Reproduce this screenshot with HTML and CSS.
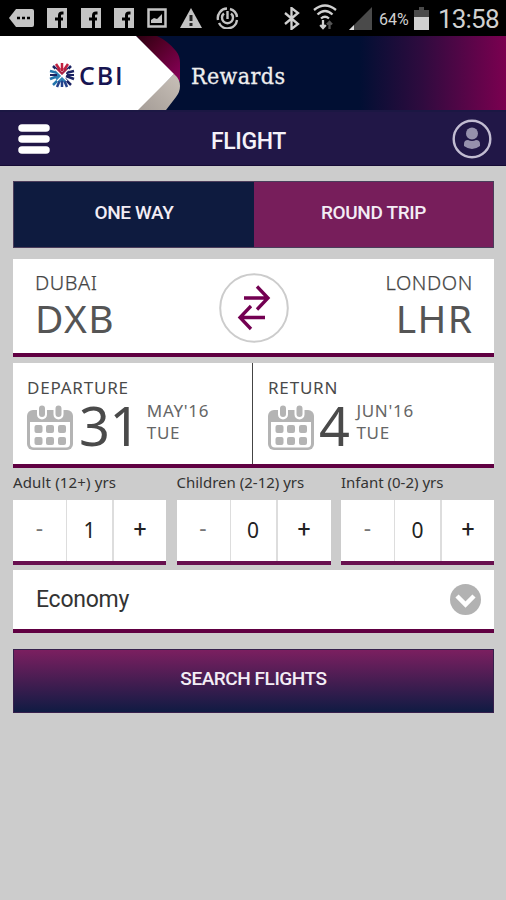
FILE: index.html
```html
<!DOCTYPE html>
<html lang="en">
<head>
<meta charset="utf-8">
<title>CBI Rewards</title>
<link rel="stylesheet" href="styles.css">
</head>
<body>
<svg class="defs" width="0" height="0" aria-hidden="true">
  <symbol id="social" viewBox="0 0 20 20"><path fill="#c4c4c4" d="M0 0h20v20H0z"/><path d="M16.500 5h-1.500q-2.500 0-2.500 2.500V20M8 11h8" fill="none" stroke="#000" stroke-width="3"/></symbol>
  <symbol id="calendar" viewBox="0 0 46 46">
    <path fill="#b4b4b4" d="M6 5h34a6 6 0 0 1 6 6v28a6 6 0 0 1-6 6H6a6 6 0 0 1-6-6V11a6 6 0 0 1 6-6z"/>
    <path fill="#fff" d="M3 17h40v21.500a4 4 0 0 1-4 4H7a4 4 0 0 1-4-4z"/>
    <g stroke-linecap="round"><path d="M15 4v5.500M31.500 4v5.500" stroke="#fff" stroke-width="10"/><path d="M15 3.500v5.500M31.500 3.500v5.500" stroke="#b4b4b4" stroke-width="6"/></g>
    <g fill="#b4b4b4"><rect x="7.500" y="20" width="8" height="8" rx="2"/><rect x="19" y="20" width="8" height="8" rx="2"/><rect x="31" y="20" width="8" height="8" rx="2"/><rect x="7.500" y="32" width="8" height="8" rx="2"/><rect x="19" y="32" width="8" height="8" rx="2"/><rect x="31" y="32" width="8" height="8" rx="2"/></g>
  </symbol>
</svg>

<div class="status">
  <div class="notices">
    <svg width="25" height="18" viewBox="0 0 25 18"><path fill="#c4c4c4" d="M7 0h16q2 0 2 2v14q0 2-2 2H7L0 9z"/><path d="M8 9h3m2 0h3m2 0h3" stroke="#000" stroke-width="2.500"/></svg>
    <svg width="20" height="20"><use href="#social"/></svg>
    <svg width="20" height="20"><use href="#social"/></svg>
    <svg width="20" height="20"><use href="#social"/></svg>
    <svg width="20" height="20" viewBox="0 0 20 20"><path d="M1.500 1.500h17v17h-17z" fill="none" stroke="#c4c4c4" stroke-width="2.500"/><path fill="#c4c4c4" d="M4 15v-3l3-2 3 1 5-5v9z"/></svg>
    <svg width="22" height="20" viewBox="0 0 22 20"><path fill="#c4c4c4" d="M11 0l11 20H0z"/><path d="M11 7v6m0 2v3" stroke="#222" stroke-width="3"/></svg>
    <svg width="23" height="22" viewBox="0 0 23 22"><g fill="none" stroke="#c4c4c4" stroke-width="2.400"><path d="M14 2a9.500 9.500 0 0 1 7 8M21 13a9.500 9.500 0 0 1-18 3M2 13A9.500 9.500 0 0 1 11 1.500"/><path d="M8 6.500a5.500 5.500 0 1 0 7 0M11.500 4v8"/></g></svg>
  </div>
  <div class="system">
    <svg width="16" height="23" viewBox="0 0 16 23"><path d="M1 6l13 11-6.500 5V1L14 6 1 17" fill="none" stroke="#d0d0d0" stroke-width="2.300"/></svg>
    <svg class="wifi" width="24" height="26" viewBox="0 0 24 26"><g fill="none" stroke="#d0d0d0" stroke-width="2.300"><path d="M1 6q11-9 22 0M4.500 10.500q7.500-7 15 0M8 14.500q4-3.500 8 0"/><path d="M10 16v8m-2.800-3l2.800 3 2.800-3"/><path stroke="#555" d="M16.500 25v-7m-2.500 2.500l2.500-2.500 2.500 2.500"/></g></svg>
    <svg class="signal" width="23" height="23" viewBox="0 0 23 23"><path fill="#4a4a4a" d="M23 0v23H0z"/><path fill="#ddd" d="M5 18v5H0z"/></svg>
    <span class="percent">64%</span>
    <svg class="battery" width="15" height="23" viewBox="0 0 15 23"><path fill="#4a4a4a" d="M5 0h5v3h5v8H0V3h5z"/><path fill="#d0d0d0" d="M0 10h15v13H0z"/></svg>
    <span class="clock">13:58</span>
  </div>
</div>

<header class="brand">
  <div class="brand-logo">
    <svg class="ribbon" width="182" height="74" viewBox="0 0 182 74">
      <defs>
        <linearGradient id="fold" x1="0" y1="0" x2="1" y2="1"><stop offset="0" stop-color="#2b0010"/><stop offset=".35" stop-color="#500025"/><stop offset="1" stop-color="#8c005c"/></linearGradient>
        <linearGradient id="tail" x1="1" y1="0" x2="0" y2="1"><stop offset="0" stop-color="#c8c0b8"/><stop offset="1" stop-color="#a49c96"/></linearGradient>
      </defs>
      <path fill="url(#fold)" d="M136 0h21q11 5 19 15 4 5 4 12v19l-6-7z"/>
      <path fill="url(#tail)" d="M174 38q6 5 6 12 0 6-4 11l-10 13h-30z"/>
      <path fill="#fff" d="M0 0h136l38 38-36 36H0z"/>
    </svg>
    <div class="logo">
      <svg width="26" height="26" viewBox="-13 -13 26 26">
        <g stroke-width="2.500" fill="none">
          <path stroke="#c0203f" d="M-2-5L-6-11M2-5L6-11M0-4v-8"/>
          <path stroke="#2274ac" d="M-4 1l-8 3M-4-2l-8-2M-3 4l-6 6"/>
          <path stroke="#1b2363" d="M4-2l8-2M4 1l8 3M3 4l6 6M-4-4L-9-9M4-4l5-5"/>
          <path stroke="#23428c" d="M0 4v8M-2 5l-3 7M2 5l3 7"/>
          <path stroke="#a92546" stroke-width="3" d="M-5-6L0-1l5-5"/>
          <path stroke="#2e80b5" stroke-width="3" d="M-6-2l4 3-4 3M-3 6l3-3 3 3"/>
          <path stroke="#fff" stroke-width="1.200" d="M-7-6L5 6M7-6L-5 6"/>
          <path stroke="#1b2363" stroke-width="2" d="M-12 0h7M5 0h7"/>
        </g>
      </svg>
      <span>CBI</span>
    </div>
  </div>
  <span class="brand-name">Rewards</span>
</header>

<nav class="nav">
  <svg width="32" height="30" viewBox="0 0 32 30"><path d="M4 4h24M4 15h24M4 26h24" stroke="#fff" stroke-width="7.500" stroke-linecap="round"/></svg>
  <h1>FLIGHT</h1>
  <svg width="40" height="40" viewBox="0 0 40 40"><circle cx="20" cy="20" r="18.300" fill="none" stroke="#c2bcd2" stroke-width="2.400"/><circle cx="20" cy="14.500" r="6" fill="#9691ad"/><path fill="#9691ad" d="M12 25q0-4 4-4 4 2 8 0 4 0 4 4v2q-8 6-16 0z"/></svg>
</nav>

<main>
  <div class="tabs"><button class="one">ONE WAY</button><button class="round">ROUND TRIP</button></div>

  <section class="route card">
    <div class="place"><span class="city">DUBAI</span><span class="code">DXB</span></div>
    <svg class="swap" width="70" height="70" viewBox="0 0 70 70"><circle cx="35" cy="35" r="33.800" fill="#fff" stroke="#ccc" stroke-width="2"/><path d="M25 25h23M38 13.500L49 25 38 36.500M46 44.500H22M32 33L21 44.500 32 56" fill="none" stroke="#730052" stroke-width="3.300"/></svg>
    <div class="place to"><span class="city">LONDON</span><span class="code">LHR</span></div>
  </section>

  <section class="dates card">
    <div class="date">
      <span class="caption">DEPARTURE</span>
      <div class="day"><svg width="46" height="46"><use href="#calendar"/></svg><span class="num">31</span><div class="when"><span>MAY'16</span><span>TUE</span></div></div>
    </div>
    <div class="date return">
      <span class="caption">RETURN</span>
      <div class="day"><svg width="46" height="46"><use href="#calendar"/></svg><span class="num">4</span><div class="when"><span>JUN'16</span><span>TUE</span></div></div>
    </div>
  </section>

  <section class="people">
    <div><label class="adult">Adult (12+) yrs</label><div class="stepper card"><span class="minus">-</span><b>1</b><span>+</span></div></div>
    <div><label>Children (2-12) yrs</label><div class="stepper card"><span class="minus">-</span><b>0</b><span>+</span></div></div>
    <div><label>Infant (0-2) yrs</label><div class="stepper card"><span class="minus">-</span><b>0</b><span>+</span></div></div>
  </section>

  <div class="cabin card"><span>Economy</span><svg width="31" height="31" viewBox="0 0 31 31"><circle cx="15.500" cy="15.500" r="15.500" fill="#b2b2b2"/><path d="M7 12l8.500 8.500L24 12" fill="none" stroke="#fff" stroke-width="4.500"/></svg></div>

  <button class="search">SEARCH FLIGHTS</button>
</main>
</body>
</html>
```
FILE: styles.css
```css
* { box-sizing: border-box; }
body { margin: 0; width: 506px; height: 900px; background: #ccc; font-family: Roboto, sans-serif; overflow: hidden; }
svg { display: block; flex: none; }
.defs { position: absolute; }
button { border: 0; padding: 0; font: inherit; letter-spacing: inherit; color: #f3edf5; }

.status { height: 36px; background: #000; color: #d0d0d0; display: flex; justify-content: space-between; padding: 0 6px 0 9px; }
.notices { display: flex; align-items: center; gap: 13.300px; }
.system { display: flex; align-items: center; }
.wifi { margin-left: 13px; margin-top: -2px; }
.signal { margin-left: 12px; }
.percent { font-size: 16px; margin-left: 7px; width: 33px; padding-top: 2px; }
.battery { margin-left: 2px; }
.clock { font-size: 26px; width: 62px; margin-left: 9px; letter-spacing: -.8px; padding-top: 2px; }

.brand { height: 74px; display: flex; align-items: center; background: linear-gradient(90deg, #010f33 0 71%, #2d0b3e 83%, #7b0050); }
.brand-logo { display: grid; width: 182px; height: 74px; }
.ribbon, .logo { grid-area: 1 / 1; }
.logo { z-index: 1; display: flex; align-items: center; padding: 3px 0 0 49px; gap: 4px; }
.logo span { font: 600 25px/26px "Open Sans", sans-serif; color: #171551; letter-spacing: 1.800px; }
.brand-name { margin: 5px 0 0 9px; font: 23px/30px "DejaVu Serif Condensed", "DejaVu Serif", serif; font-stretch: condensed; color: #eee; letter-spacing: .4px; -webkit-text-stroke: .3px #eee; }

.nav { height: 56px; background: #211747; border-top: 2px solid #1b1743; border-bottom: 1px solid #160b35; display: flex; align-items: center; justify-content: space-between; padding: 0 14px 0 18px; }
.nav h1 { margin: 7px 5px 0 0; color: #f5f2fa; font-size: 23px; line-height: 28px; font-weight: 500; letter-spacing: -.4px; }

main { padding: 15px 12px 0 13px; }
.card { background: #fff; border-bottom: 4px solid #600042; }
.tabs { display: flex; height: 67px; border: 1px solid #4b3d5b; font-size: 19px; font-weight: 500; letter-spacing: -.35px; }
.tabs button { padding-bottom: 5px; }
.one { width: 240px; background: #0e1b3f; }
.round { flex: 1; background: #771e5b; }

.route { margin-top: 11px; height: 98px; display: flex; justify-content: space-between; padding: 11px 22px 0; }
.place { width: 110px; display: flex; flex-direction: column; color: #444; font-family: "Noto Sans", sans-serif; }
.to { align-items: flex-end; }
.city { font-size: 20px; line-height: 26px; font-weight: 300; letter-spacing: .6px; -webkit-text-stroke: .25px #444; }
.to .city { margin-right: -1px; }
.code { font-size: 39px; line-height: 44px; color: #555; letter-spacing: 1.300px; }
.to .code { margin-right: -1.300px; }
.swap { margin-top: 3px; }

.dates { margin-top: 6px; height: 105px; display: flex; font-family: "Noto Sans", sans-serif; color: #4a4a4a; }
.date { width: 239px; padding: 14px 0 0 14px; }
.return { width: 242px; padding-left: 15px; border-left: 1px solid #444; }
.caption { display: block; font-size: 17px; line-height: 22px; letter-spacing: .8px; }
.day { display: flex; margin-top: 5px; height: 48px; align-items: center; }
.num { font-size: 54px; line-height: 46px; margin: -6px 0 0 6px; letter-spacing: -.5px; }
.when { display: flex; flex-direction: column; margin: -12px 0 0 7px; font-size: 17px; line-height: 22px; letter-spacing: .7px; color: #666; }
.return .num { margin-left: 5px; }
.return .when { margin-left: 7px; }

.people { display: grid; grid-template-columns: 153px 154px 153px; gap: 10.500px; height: 97px; }
.people label { display: block; height: 32px; padding-top: 3px; font: 15px/22px "Noto Sans", sans-serif; color: #333; white-space: nowrap; }
.people .adult { letter-spacing: .15px; }
.stepper { height: 65px; display: grid; grid-template-columns: 53px 48px 1fr; text-align: center; font-size: 23px; line-height: 59px; border-color: #68104f; color: #222; }
.stepper b { font: 21px/60px "Noto Sans", sans-serif; border: solid #ddd; border-width: 0 2px 0 1px; }
.stepper .minus { color: #777; }

.cabin { margin-top: 5px; height: 63px; display: flex; justify-content: space-between; align-items: center; padding: 0 13px 0 23px; font-size: 23px; letter-spacing: -.25px; color: #333; }
.search { display: block; width: 100%; height: 64px; margin-top: 16px; padding-bottom: 5px; border: 1px solid #36204c; background: linear-gradient(#7b1f60, #101b43); font-size: 19px; font-weight: 500; letter-spacing: -.45px; }
```
